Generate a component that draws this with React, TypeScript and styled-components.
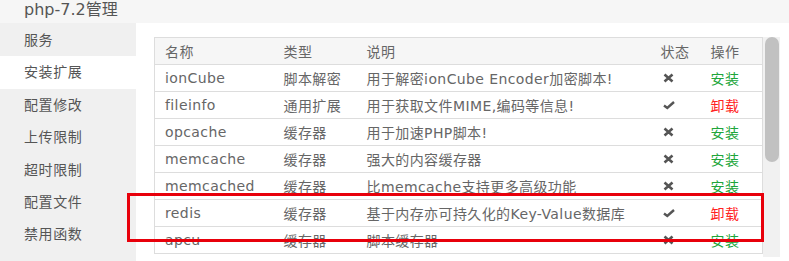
import React from "react";
import styled, { createGlobalStyle } from "styled-components";

const GlobalStyle = createGlobalStyle`
  html, body {
    margin: 0;
    padding: 0;
    background: #fff;
  }
  body {
    font-family: "DejaVu Sans", "Noto Sans CJK SC", sans-serif;
    font-size: 14px;
    color: #666;
  }
`;

type Ext = {
    name: string;
    type: string;
    desc: string;
    installed: boolean;
};

// only the rows that fit the visible part of the list
const extensions: Ext[] = [
    {name: "ionCube", type: "脚本解密", desc: "用于解密ionCube Encoder加密脚本!", installed: false},
    {name: "fileinfo", type: "通用扩展", desc: "用于获取文件MIME,编码等信息!", installed: true},
    {name: "opcache", type: "缓存器", desc: "用于加速PHP脚本!", installed: false},
    {name: "memcache", type: "缓存器", desc: "强大的内容缓存器", installed: false},
    {name: "memcached", type: "缓存器", desc: "比memcache支持更多高级功能", installed: false},
    {name: "redis", type: "缓存器", desc: "基于内存亦可持久化的Key-Value数据库", installed: true},
    {name: "apcu", type: "缓存器", desc: "脚本缓存器", installed: false},
];

const menu = ["服务", "安装扩展", "配置修改", "上传限制", "超时限制", "配置文件", "禁用函数"];

const Page = styled.div`
  position: relative;
  width: 789px;
  height: 261px;
  display: flex;
  flex-direction: column;
  overflow: hidden;
`;

const TitleBar = styled.div`
  height: 23px;
  flex: none;
  background: #f6f6f6;
  padding-left: 24px;
  font-size: 16px;
  line-height: 20px;
  color: #555;
`;

const Body = styled.div`
  flex: 1;
  display: flex;
  min-height: 0;
`;

const Sidebar = styled.div`
  width: 136px;
  flex: none;
  background: #f0f0f0;
  padding-top: 1px;
`;

const MenuItem = styled.div<{ $active?: boolean }>`
  height: 32.4px;
  line-height: 32px;
  padding-left: 24px;
  font-size: 14px;
  letter-spacing: 0.6px;
  color: #555;
  background: ${props => props.$active ? "#fff" : "transparent"};
`;

const Content = styled.div`
  flex: 1;
  display: flex;
  padding: 14px 9px 4px 18px;
  min-width: 0;
  min-height: 0;
`;

const Viewport = styled.div`
  flex: 1;
  min-width: 0;
  overflow: hidden;
`;

const ScrollTrack = styled.div`
  width: 17px;
  flex: none;
  background: #f1f1f1;
  padding: 0 1px 0 2px;
  box-sizing: border-box;
`;

const ScrollThumb = styled.div`
  height: 125px;
  background: #c1c1c1;
  border-radius: 7px;
`;

const Table = styled.table`
  width: 100%;
  border-collapse: collapse;
  table-layout: fixed;
  border: 1px solid #ddd;
  letter-spacing: 0.4px;
`;

const Th = styled.th<{ $w?: number }>`
  box-sizing: border-box;
  width: ${props => props.$w ? props.$w + "px" : "auto"};
  height: 27px;
  padding: 0 0 0 10px;
  text-align: left;
  font-weight: normal;
  background: #f6f6f6;
  color: #666;
  border-bottom: 1px solid #ddd;
  white-space: nowrap;
`;

const Td = styled.td`
  box-sizing: border-box;
  height: 27px;
  padding: 0 0 0 10px;
  border-bottom: 1px solid #ddd;
  white-space: nowrap;
  overflow: hidden;
  color: #666;
`;

const StatusCell = styled(Td)`
  padding-left: 12px;
  line-height: 0;
`;

const Action = styled.a<{ $installed: boolean }>`
  color: ${props => props.$installed ? "#f22" : "#20a53a"};
  text-decoration: none;
  cursor: pointer;
`;

const Annotation = styled.div`
  position: absolute;
  left: 127px;
  top: 193px;
  width: 637px;
  height: 49px;
  box-sizing: border-box;
  border: 3px solid #e8000b;
  pointer-events: none;
`;

const CrossIcon = () => (
    <svg width="11" height="10" viewBox="0 0 11 10">
        <path d="M1.5 1.5 L9.5 8.5 M9.5 1.5 L1.5 8.5" stroke="#555" strokeWidth="2.6" strokeLinecap="butt"/>
    </svg>
);

const CheckIcon = () => (
    <svg width="12" height="10" viewBox="0 0 12 10">
        <path d="M1 5.5 L4.3 8 L11 2" stroke="#555" strokeWidth="2.4" fill="none" strokeLinejoin="miter"/>
    </svg>
);

const App = () => {
    return (
        <>
            <GlobalStyle/>
            <Page>
                <TitleBar>php-7.2管理</TitleBar>
                <Body>
                    <Sidebar>
                        {menu.map((m, i) => (
                            <MenuItem key={m} $active={i === 1}>{m}</MenuItem>
                        ))}
                    </Sidebar>
                    <Content>
                        <Viewport>
                            <Table>
                                <thead>
                                <tr>
                                    <Th $w={119}>名称</Th>
                                    <Th $w={83}>类型</Th>
                                    <Th $w={294}>说明</Th>
                                    <Th $w={50}>状态</Th>
                                    <Th>操作</Th>
                                </tr>
                                </thead>
                                <tbody>
                                {extensions.map(ext => (
                                    <tr key={ext.name}>
                                        <Td>{ext.name}</Td>
                                        <Td>{ext.type}</Td>
                                        <Td>{ext.desc}</Td>
                                        <StatusCell>{ext.installed ? <CheckIcon/> : <CrossIcon/>}</StatusCell>
                                        <Td>
                                            <Action $installed={ext.installed}>{ext.installed ? "卸载" : "安装"}</Action>
                                        </Td>
                                    </tr>
                                ))}
                                </tbody>
                            </Table>
                        </Viewport>
                        <ScrollTrack>
                            <ScrollThumb/>
                        </ScrollTrack>
                    </Content>
                </Body>
                <Annotation/>
            </Page>
        </>
    );
};

export default App;
